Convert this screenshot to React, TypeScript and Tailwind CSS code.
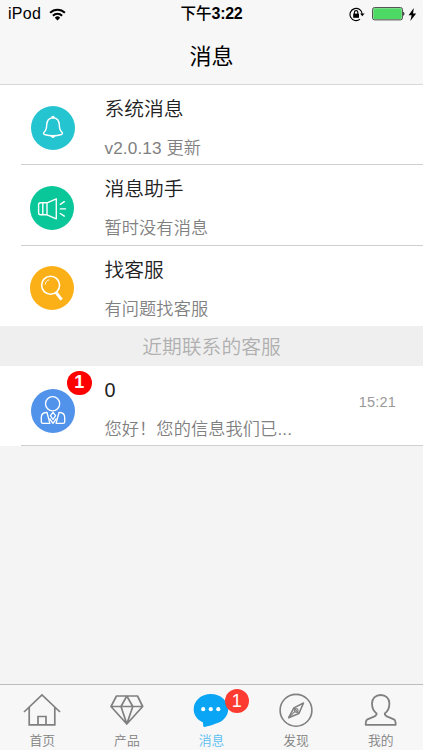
import type { ReactNode } from 'react';

type RowProps = {
  icon: ReactNode;
  iconClass: string;
  title: string;
  text: string;
  time?: string;
  badge?: number;
  className: string;
  divider?: boolean;
};

type TabProps = {
  icon: ReactNode;
  label: string;
  active?: boolean;
  badge?: number;
};

function StatusBar() {
  return (
    <div className="relative flex h-[28px] items-center justify-center text-black">
      <div className="absolute left-[8px] top-0 flex h-full items-center gap-[8px]">
        <span className="text-[16px] tracking-[0.3px]">iPod</span>
        <svg width="17" height="13" viewBox="0 0 17 13" fill="none" stroke="#000" strokeWidth="2">
          <path d="M1.1 4.7a10.5 10.5 0 0 1 14.8 0" />
          <path d="M3.9 7.7a6.5 6.5 0 0 1 9.2 0" />
          <path d="M8.5 12.4L5.8 9.7a3.8 3.8 0 0 1 5.4 0z" fill="#000" stroke="none" />
        </svg>
      </div>
      <span className="text-[15.5px] font-medium">
        下午<span className="text-[16px] font-bold tracking-[-0.3px]">3:22</span>
      </span>
      <div className="absolute left-[349px] top-0 flex h-full items-center">
        <svg width="16" height="15" viewBox="0 0 16 15" fill="none" stroke="#000">
          <path d="M13.2 7.2a6.1 6.1 0 1 0-2.2 5" strokeWidth="1.1" />
          <path d="M11.1 6.5h4.5l-2.3 2.8z" fill="#000" stroke="none" />
          <rect x="4.2" y="6.6" width="5.8" height="4.2" fill="#000" stroke="none" />
          <path d="M5.4 7V5.3a1.7 1.7 0 0 1 3.4 0V7" strokeWidth="1.1" />
        </svg>
        <svg className="ml-[7px]" width="33" height="14" viewBox="0 0 33 14">
          <rect x="0.5" y="0.5" width="30" height="12.4" rx="2" fill="#a5dfae" stroke="#555" />
          <rect x="1.5" y="1.5" width="28" height="10.4" rx="1" fill="#4cd964" />
          <path d="M31.2 4.7c1.6.3 1.6 3.7 0 4z" fill="#222" />
        </svg>
        <svg className="ml-[3px]" width="9" height="13" viewBox="0 0 8 12">
          <path d="M5.2 0L.4 6.8h2.8L2 12l5.4-7H4.5z" fill="#000" />
        </svg>
      </div>
    </div>
  );
}

const BellIcon = (
  <svg width="44" height="44" viewBox="0 0 44 44" fill="none" stroke="#fff" strokeWidth="1.4" strokeLinejoin="round">
    <path d="M22 11.7c-4.5.3-6.2 3.500-6.300 7.400-.1 3.800-.7 5.700-2.700 7.200-.8.900-.5 1.900.5 2.200 5.600 1.600 11.400 1.600 17 0 1-.3 1.300-1.300.5-2.200-2-1.500-2.600-3.400-2.700-7.200-.1-3.900-1.800-7.100-6.300-7.400z" />
    <path d="M20.800 11.700a1.200 1.200 0 0 1 2.400 0M20.300 30.200h3.400L22 31.300z" />
  </svg>
);

const SpeakerIcon = (
  <svg width="44" height="44" viewBox="0 0 44 44" fill="none" stroke="#fff" strokeWidth="1.4" strokeLinejoin="round" strokeLinecap="round">
    <path d="M12.800 16.800h-2.300c-1.300 0-1.900.7-1.900 2v8c0 1.300.6 2 1.900 2h2.300zM12.800 16.800h4.200v12h-4.200M17 16.800l9.300-4v20l-9.300-4z" />
    <path d="M30.300 18.300l4-2.600M30.300 22.900h5.200M30.300 27.500l4 2.600" />
  </svg>
);

const SearchIcon = (
  <svg width="44" height="44" viewBox="0 0 44 44" fill="none" stroke="#fff">
    <circle cx="20.6" cy="19.2" r="9" strokeWidth="1.6" />
    <path d="M15.2 18.500c.3-2.500 1.700-4.100 4-4.700" strokeWidth="1" />
    <path d="M25.900 26.300l5.700 7.300" strokeWidth="3" />
  </svg>
);

const AgentIcon = (
  <svg width="44" height="44" viewBox="0 0 44 44" fill="none" stroke="#fff" strokeWidth="1.3" strokeLinejoin="round">
    <circle cx="21.600" cy="14.800" r="7.100" />
    <path d="M15.300 23.500c-3.500.1-5 1.700-5 5v4.200c0 1 .6 1.600 1.600 1.600h7L16 23.500zM28.700 23.500c3.500.1 5 1.700 5 5v4.200c0 1-.6 1.600-1.600 1.600h-7L28 23.500z" />
    <path d="M22 23.300l-2.600 3.300L22 30.500l2.600-3.900zM18.500 29.500l3.500 4.800 3.500-4.800" />
  </svg>
);

function Row({ icon, iconClass, title, text, time, badge, className, divider }: RowProps) {
  return (
    <div className={`relative flex bg-white ${className}`}>
      <div className={`relative h-[44px] w-[44px] shrink-0 rounded-full ${iconClass}`}>
        {icon}
        {badge && (
          <span className="absolute -top-[18.5px] left-[36px] flex h-[24.5px] w-[24.5px] items-center justify-center rounded-full bg-[#fe0000] text-[18px] font-bold text-white">
            {badge}
          </span>
        )}
      </div>
      <div className="absolute left-[104.5px] top-0">
        <div className="h-[46px] text-[19.8px] leading-[48px] font-[350] text-[#222]">{title}</div>
        <div className="h-[34px] text-[17.2px] leading-[34px] font-[350] tracking-[0.1px] whitespace-nowrap text-[#808080]">{text}</div>
      </div>
      {time && <span className="ml-auto mr-[27px] mt-[1px] text-[14.5px] leading-[24px] tracking-[0.2px] text-[#999]">{time}</span>}
      {divider && <div className="absolute bottom-0 left-[21px] right-0 h-px bg-[#cfcfd1]" />}
    </div>
  );
}

const HomeIcon = (
  <svg width="38" height="34" viewBox="0 0 38 34" fill="none" stroke="#808080" strokeWidth="1.7">
    <path d="M1 19L19 2l18 17M6.2 14.500v17.300h25.600V14.500M15 31.500v-8h8v8" />
  </svg>
);

const DiamondIcon = (
  <svg width="38" height="34" viewBox="0 0 38 34" fill="none" stroke="#808080" strokeWidth="1.7" strokeLinejoin="round">
    <path d="M8.500 3h21l5.200 10.500L18.800 31 3 13.500zM3 13.500h31.700M18.800 3l-5.800 10.500L18.800 31l6-17.500z" />
  </svg>
);

const ChatIcon = (
  <svg width="38" height="34" viewBox="0 0 38 34">
    <path d="M18.800 1C9.100 1 1.700 7.700 1.700 16.200c0 5.900 3.500 10.600 9.100 13.100l.5 3.800c.1.800.6 1.100 1.400.8 3.200-1 6.800-1.300 9.900-3 8.100-1.700 13.600-7.700 13.600-14.700C36.200 7.700 28.500 1 18.800 1z" fill="#0aa5f4" />
    <g fill="#fff">
      <circle cx="11.200" cy="16.200" r="2.100" />
      <circle cx="18.800" cy="16.200" r="2.100" />
      <circle cx="26.300" cy="16.200" r="2.100" />
    </g>
  </svg>
);

const CompassIcon = (
  <svg width="38" height="34" viewBox="0 0 38 34" fill="none" stroke="#808080" strokeWidth="1.6">
    <circle cx="19" cy="17.300" r="15.900" />
    <path d="M26.500 10l-4.600 10.500-10.200 4.200 5.200-9.800z" strokeLinejoin="round" />
    <path d="M16.900 14.900l5 5.600M11.700 24.700l6.500-6.500" strokeWidth="1.2" />
    <circle cx="19.300" cy="17.500" r="1.800" strokeWidth="1.2" />
  </svg>
);

const PersonIcon = (
  <svg width="38" height="34" viewBox="0 0 38 34" fill="none" stroke="#808080" strokeWidth="1.8" strokeLinejoin="round">
    <path d="M18.700 2c-5.300 0-8.700 3.500-8.700 8.500 0 4.600 1.500 7.700 4.600 9.900.2 2-.9 2.700-3.200 3.500l-5.900 2.400c-1.400.6-1.800 1.600-1.800 5.500h30c0-3.900-.4-4.900-1.800-5.500l-5.900-2.400c-2.300-.8-3.400-1.500-3.200-3.500 3.100-2.200 4.600-5.300 4.600-9.900C27.400 5.500 24 2 18.700 2z" />
  </svg>
);

function Tab({ icon, label, active, badge }: TabProps) {
  return (
    <div className="relative flex flex-1 flex-col items-center pt-[8px]">
      {icon}
      <span className={`mt-[5px] text-[12.8px] leading-[18px] font-[350] ${active ? 'text-[#5bbdf2]' : 'text-[#808080]'}`}>{label}</span>
      {badge && (
        <span className="absolute left-[55.5px] top-[4px] flex h-[24px] w-[24px] items-center justify-center rounded-full bg-[#fd3b30] text-[18px] text-white">
          {badge}
        </span>
      )}
    </div>
  );
}

export default function App() {
  return (
    <main className="flex h-[750px] w-[423px] flex-col overflow-hidden bg-[#f4f4f4] font-['Liberation_Sans','Noto_Sans_CJK_SC',sans-serif]">
      <header className="h-[85px] border-b border-[#d8d8da] bg-[#f7f7f7]">
        <StatusBar />
        <h1 className="h-[56px] text-center text-[22px] leading-[58px] text-black">消息</h1>
      </header>

      <Row className="h-[80px] pl-[31px] pt-[21px]" iconClass="bg-[#24c4d1]" icon={BellIcon} title="系统消息" text="v2.0.13 更新" divider />
      <Row className="h-[81px] pl-[30px] pt-[21px]" iconClass="bg-[#09c799]" icon={SpeakerIcon} title="消息助手" text="暂时没有消息" divider />
      <Row className="h-[80px] pl-[30px] pt-[20px]" iconClass="bg-[#fcb017]" icon={SearchIcon} title="找客服" text="有问题找客服" />
      <div className="h-[40px] bg-[#efefef] text-center text-[19.8px] leading-[42px] font-[350] text-[#b0b0b0]">近期联系的客服</div>
      <Row className="h-[80px] pl-[31px] pt-[23px]" iconClass="bg-[#5193eb]" icon={AgentIcon} title="0" text="您好！您的信息我们已..." time="15:21" badge={1} divider />

      <nav className="mt-auto flex h-[66px] border-t border-[#bcbcbc] bg-[#f7f7f7]">
        <Tab icon={HomeIcon} label="首页" />
        <Tab icon={DiamondIcon} label="产品" />
        <Tab icon={ChatIcon} label="消息" active badge={1} />
        <Tab icon={CompassIcon} label="发现" />
        <Tab icon={PersonIcon} label="我的" />
      </nav>
    </main>
  );
}
